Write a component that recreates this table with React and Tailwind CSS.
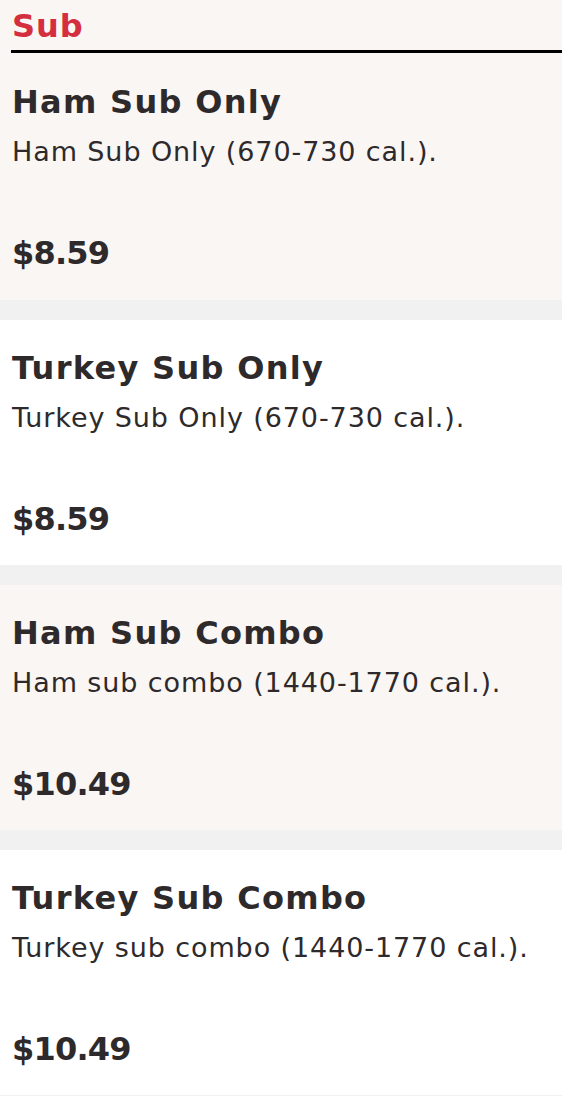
export default function App() {
  const items = [
    { t: "Ham Sub Only", d: "Ham Sub Only (670-730 cal.).", p: "$8.59", tint: true },
    { t: "Turkey Sub Only", d: "Turkey Sub Only (670-730 cal.).", p: "$8.59", tint: false },
    { t: "Ham Sub Combo", d: "Ham sub combo (1440-1770 cal.).", p: "$10.49", tint: true },
    { t: "Turkey Sub Combo", d: "Turkey sub combo (1440-1770 cal.).", p: "$10.49", tint: false },
  ];
  return (
    <div className="w-[562px] h-[1096px] overflow-hidden bg-[#f1f1f1] text-[#2e2a2b]" style={{ fontFamily: '"DejaVu Sans", sans-serif' }}>
      <div className="bg-[#faf6f4] pt-[4px]">
        <div className="ml-[11px] border-b-[3px] border-black h-[49px]">
          <div className="pl-[1px] text-[32px] leading-[44px] font-bold tracking-[1px] text-[#d42f3f]">Sub</div>
        </div>
      </div>
      <div className="flex flex-col gap-[20px]">
        {items.map((it, i) => (
          <div key={i} className={`${it.tint ? "bg-[#faf6f4]" : "bg-white"} ${i === 0 ? "h-[247px] pt-[29px]" : "h-[245px] pt-[28px]"} px-[12px] flex flex-col`}>
            <div className="text-[32px] leading-[40px] font-bold tracking-[1.3px] whitespace-nowrap">{it.t}</div>
            <div className="mt-[12px] text-[27px] leading-[36px] tracking-[0.9px] whitespace-nowrap">{it.d}</div>
            <div className="mt-[63px] text-[32px] leading-[40px] font-bold tracking-[-0.8px]">{it.p}</div>
          </div>
        ))}
      </div>
    </div>
  );
}
